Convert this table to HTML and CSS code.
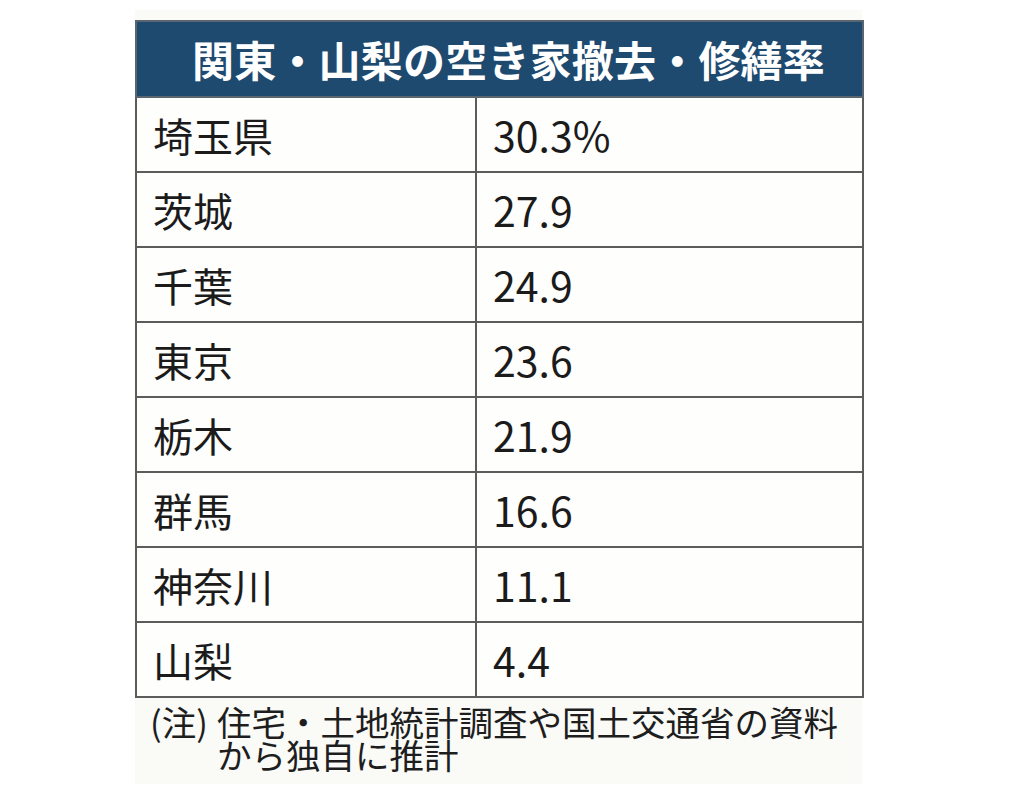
FILE: index.html
```html
<!DOCTYPE html>
<html lang="ja">
<head>
<meta charset="utf-8">
<title>関東・山梨の空き家撤去・修繕率</title>
<link rel="stylesheet" href="styles.css">
</head>
<body>
<div class="panel">
  <table class="rates">
    <colgroup>
      <col class="col-pref">
      <col class="col-val">
    </colgroup>
    <thead>
      <tr><th colspan="2" class="title">関東・山梨の空き家撤去・修繕率</th></tr>
    </thead>
    <tbody>
      <tr><td class="pref">埼玉県</td><td class="val">30.3%</td></tr>
      <tr><td class="pref">茨城</td><td class="val">27.9</td></tr>
      <tr><td class="pref">千葉</td><td class="val">24.9</td></tr>
      <tr><td class="pref">東京</td><td class="val">23.6</td></tr>
      <tr><td class="pref">栃木</td><td class="val">21.9</td></tr>
      <tr><td class="pref">群馬</td><td class="val">16.6</td></tr>
      <tr><td class="pref">神奈川</td><td class="val">11.1</td></tr>
      <tr><td class="pref">山梨</td><td class="val">4.4</td></tr>
    </tbody>
  </table>
  <div class="note">
    <span class="note-mark">(注)</span><span class="note-text">住宅・土地統計調査や国土交通省の資料から独自に推計</span>
  </div>
</div>
</body>
</html>
```

FILE: styles.css
```css
html, body {
  margin: 0;
  padding: 0;
  background: #ffffff;
}
body {
  font-family: "Noto Sans CJK JP", "Noto Sans", sans-serif;
  color: #1a1a1a;
}
.panel {
  margin: 10px 0 0 135px;
  width: 727px;
  background: #fafaf7;
  padding: 10px 0 13px 0;
  box-sizing: border-box;
}
.rates {
  width: 727px;
  border-collapse: collapse;
  table-layout: fixed;
  background: #fefefc;
}
.col-pref {
  width: 340px;
}
.col-val {
  width: 387px;
}
.rates th, .rates td {
  border: 2px solid #5c5c5c;
  padding: 0;
}
.title {
  height: 74px;
  background: #1f4a70;
  color: #ffffff;
  font-size: 42px;
  font-weight: 700;
  line-height: 1;
  text-align: center;
  padding-left: 18px !important;
  letter-spacing: 0.2px;
  border-color: #5a6570 !important;
}
.rates td {
  height: 73px;
  font-size: 40px;
  line-height: 1;
  padding-left: 16px;
  vertical-align: middle;
  color: #1b1b1b;
}
.rates td.val {
  font-size: 41px;
}
.note {
  display: flex;
  margin-top: 7px;
  padding-left: 15px;
  font-size: 34.5px;
  line-height: 33px;
  color: #1e1e1e;
}
.note-mark {
  flex: none;
  width: 67px;
}
.note-text {
  width: 625px;
}
```
